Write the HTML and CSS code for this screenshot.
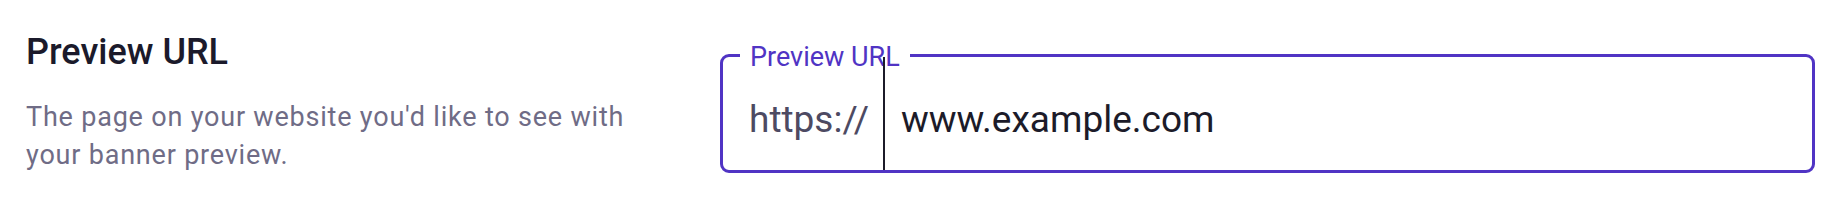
FILE: index.html
```html
<!DOCTYPE html>
<html lang="en">
<head>
<meta charset="utf-8">
<title>Preview URL</title>
<link rel="stylesheet" href="styles.css">
</head>
<body>
<section class="setting">
  <div class="info">
    <h2 class="title">Preview URL</h2>
    <p class="desc">The page on your website you'd like to see with your banner preview.</p>
  </div>
  <div class="field">
    <span class="field-label">Preview URL</span>
    <span class="prefix">https://</span>
    <span class="value">www.example.com</span>
  </div>
</section>
</body>
</html>
```
FILE: styles.css
```css
* { box-sizing: border-box; }
html, body { margin: 0; padding: 0; background: #ffffff; }
body { font-family: Roboto, "Noto Sans", "Liberation Sans", sans-serif; }

.setting {
  display: grid;
  grid-template-columns: 640px 1fr;
  column-gap: 54px;
  padding: 30px 25px 0 26px;
}

.title {
  margin: 0;
  font-size: 36px;
  line-height: 44px;
  font-weight: 500;
  color: #1b1a2b;
}

.desc {
  margin: 24px 0 0;
  font-size: 27px;
  line-height: 38px;
  letter-spacing: 0.8px;
  font-weight: 400;
  color: #6f6c86;
}

.field {
  position: relative;
  margin-top: 24px;
  height: 119px;
  border: 3px solid #5034c4;
  border-radius: 9px;
  display: flex;
  align-items: stretch;
}

.field-label {
  position: absolute;
  left: 17px;
  top: -13px;
  padding: 0 10px;
  background: #ffffff;
  font-size: 27px;
  line-height: 27px;
  color: #5034c4;
}

.prefix {
  position: relative;
  display: flex;
  align-items: center;
  padding: 12px 14px 0 26px;
  border-right: 2px solid #1c1b29;
  font-size: 37px;
  color: #4d4a62;
}

.value {
  display: flex;
  align-items: center;
  padding: 12px 0 0 16px;
  font-size: 37px;
  color: #1c1b29;
}
```
